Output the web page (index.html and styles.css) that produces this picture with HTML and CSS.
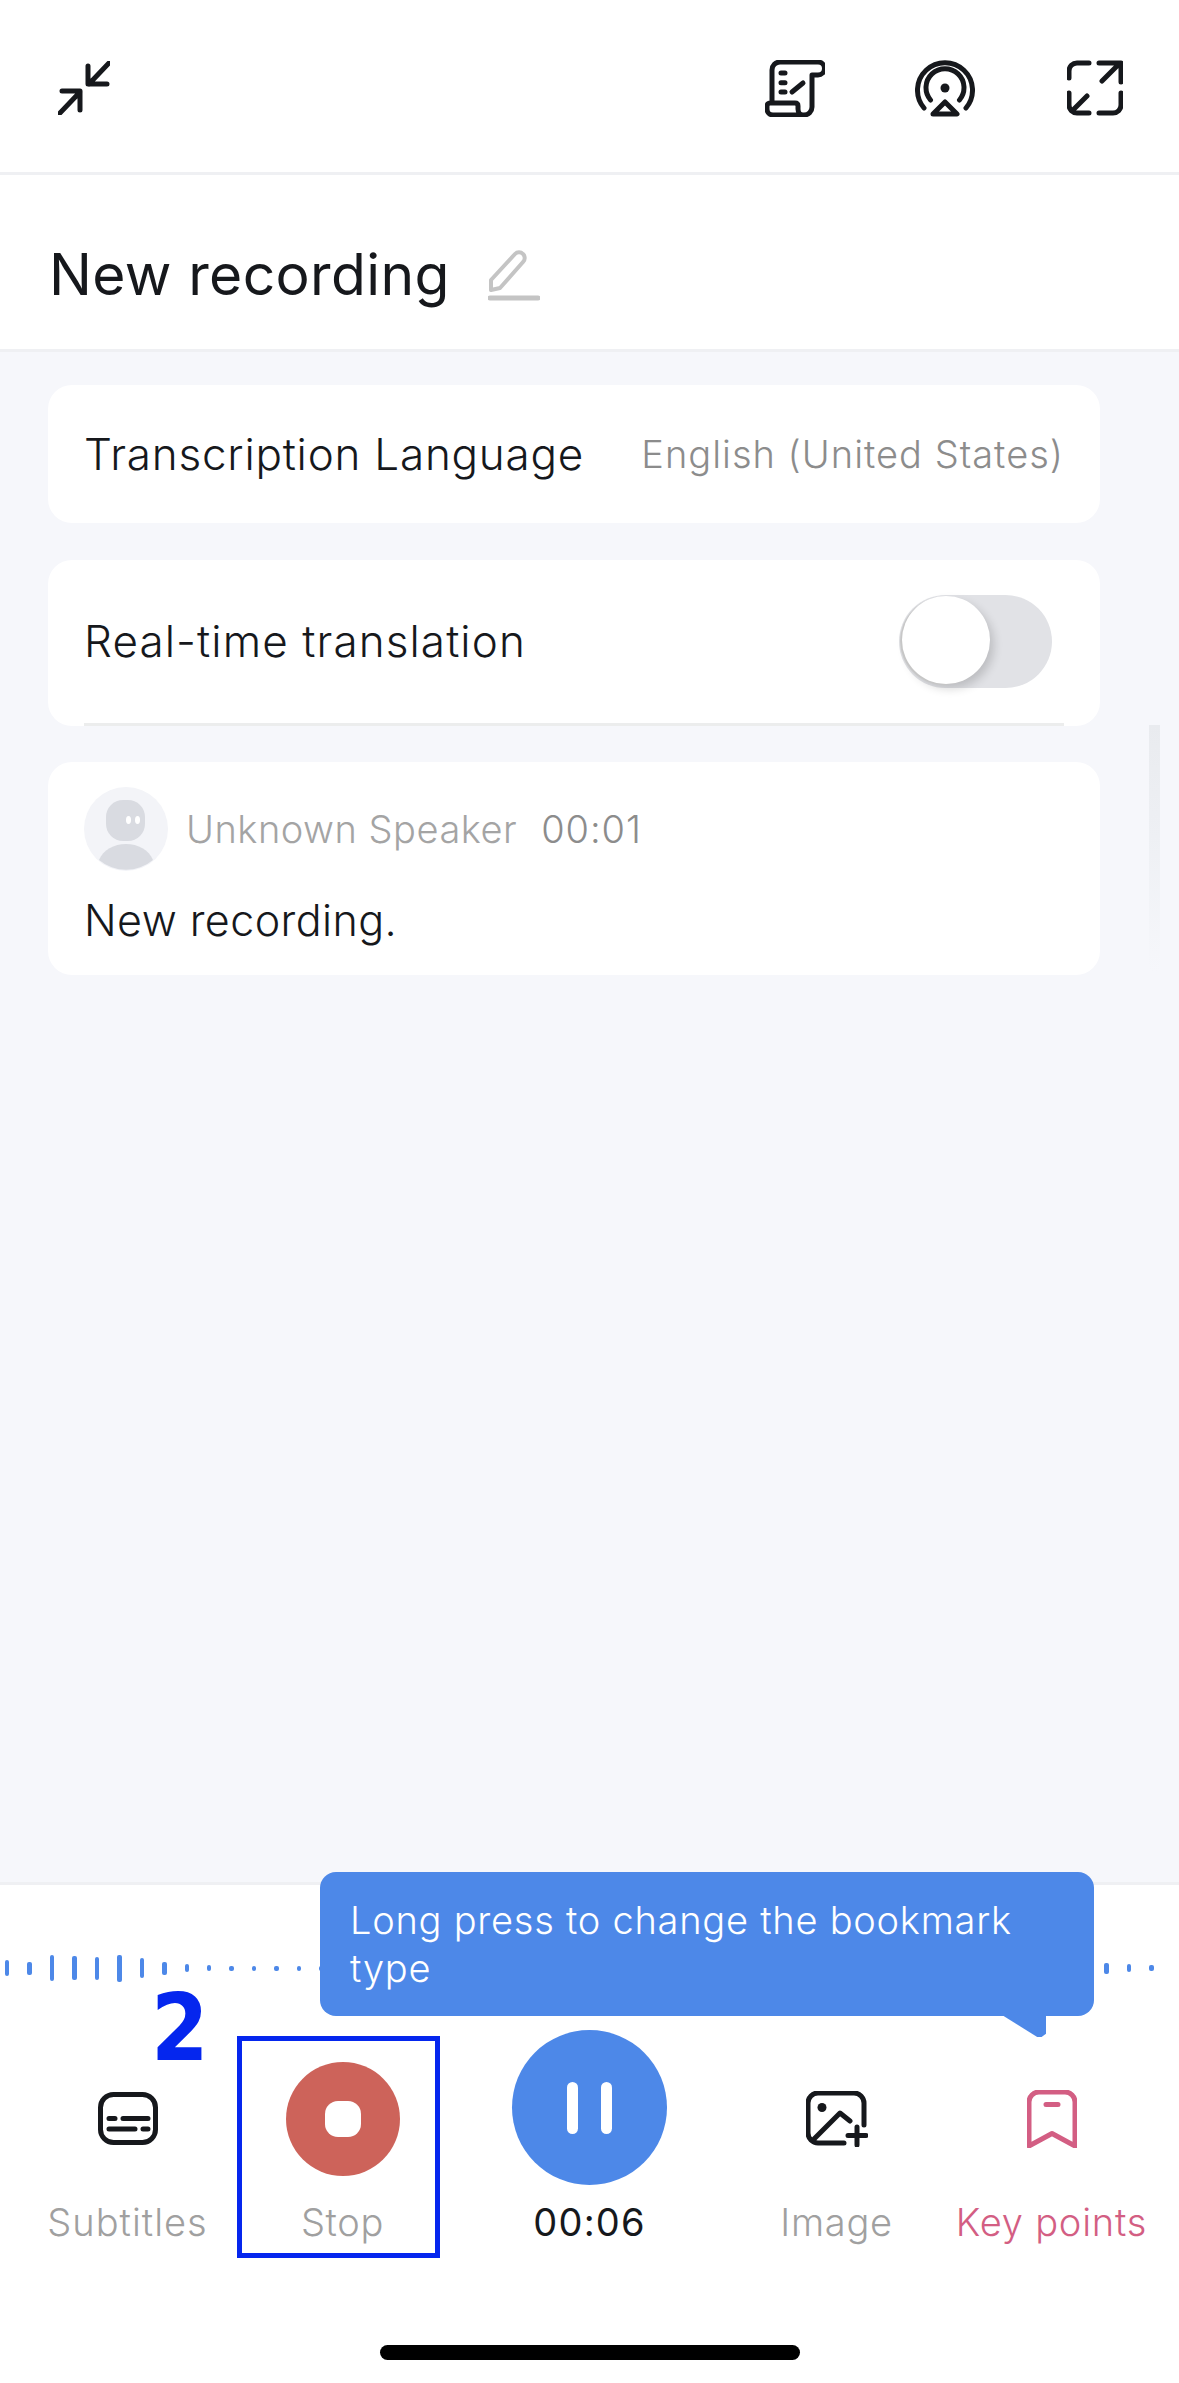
FILE: index.html
```html
<!DOCTYPE html>
<html lang="en">
<head>
<meta charset="utf-8">
<title>New recording</title>
<link rel="stylesheet" href="styles.css">
</head>
<body>
<div class="app">
  <header class="topbar">
    <svg class="ic ic-collapse" width="52" height="54" viewBox="0 0 52 54"><path d="M51 2 31 23M30 5v18h19M1 53 22 31M4 30h18v19"/></svg>
    <div class="top-actions">
      <svg class="ic" width="60" height="57" viewBox="0 0 60 57"><path d="M7 42V10a8 8 0 0 1 8-8h38a6.500 6.500 0 0 1 0 13h-6v32a8 8 0 0 1-8 8H8a6 6 0 0 1-6-6v-3a3 3 0 0 1 3-3h25c2 0 3 1 3 3v3c0 3 2 6 5 6"/><path d="M16 13h4M16 22.700h4M16 32h4M27 32l11-9"/></svg>
      <svg class="ic ic-radar" width="60" height="60" viewBox="0 0 60 60"><path d="M9 50a27.500 27.500 0 1 1 42 0M15.500 42a19 19 0 1 1 29 0M30 44l12 12H18z"/><circle class="fill" cx="30" cy="30" r="4.500"/></svg>
      <svg class="ic" width="56" height="56" viewBox="0 0 56 56"><path d="M22 3H10a8 8 0 0 0-8 8v7M32 3h22v19M35 21 51 5M2 33v12a8 8 0 0 0 8 8h12M54 33v12a8 8 0 0 1-8 8H32M20 36 5 51"/></svg>
    </div>
  </header>
  <section class="titlebar">
    <h1 class="title">New recording</h1>
    <svg class="pencil" width="52" height="52" viewBox="0 0 52 52"><path d="M3 41V31L27 5a5.500 5.500 0 0 1 8 0 5.500 5.500 0 0 1 0 8L12 39z"/><path class="under" d="M2 49h48"/></svg>
  </section>
  <main class="content">
    <div class="card row lang-card">
      <span class="label">Transcription Language</span>
      <span class="value">English (United States)</span>
    </div>
    <div class="card translate-card">
      <div class="row translate-row">
        <span class="label label-wide">Real-time translation</span>
        <span class="toggle"><span class="thumb"></span></span>
      </div>
      <div class="divider"></div>
    </div>
    <div class="card speech-card">
      <div class="speaker">
        <svg class="avatar" width="84" height="84" viewBox="0 0 84 84"><circle cx="42" cy="42" r="42" fill="#f3f4f8"/><rect x="22" y="13" width="39" height="41" rx="17" fill="#d9dbe1"/><ellipse cx="44.500" cy="33" rx="2.500" ry="4" fill="#fff"/><ellipse cx="53.500" cy="33" rx="2.500" ry="4" fill="#fff"/><path d="M15 73c4-10 15-16 27-16s23 6 27 16a42 42 0 0 1-54 0z" fill="#d9dbe1"/></svg>
        <span class="speaker-name">Unknown Speaker</span>
        <span class="speaker-time">00:01</span>
      </div>
      <p class="speech">New recording.</p>
    </div>
    <div class="scrollbar"></div>
  </main>
  <footer class="panel">
    <div class="wave" id="wave">
      <i style="height:16px"></i><i style="height:13px"></i><i style="height:26px"></i><i style="height:24px"></i><i style="height:23px"></i><i style="height:27px"></i><i style="height:20px"></i><i style="height:13px"></i><i style="height:8px"></i><i style="height:6px"></i><i style="height:5px"></i><i style="height:5px"></i><i style="height:5px"></i><i style="height:5px"></i>
      <i style="height:5px"></i><i style="height:5px"></i><i style="height:5px"></i><i style="height:5px"></i><i style="height:5px"></i><i style="height:5px"></i><i style="height:5px"></i><i style="height:5px"></i><i style="height:5px"></i><i style="height:5px"></i><i style="height:5px"></i><i style="height:5px"></i><i style="height:5px"></i><i style="height:5px"></i><i style="height:5px"></i><i style="height:5px"></i><i style="height:5px"></i><i style="height:5px"></i><i style="height:5px"></i><i style="height:5px"></i><i style="height:5px"></i><i style="height:5px"></i><i style="height:5px"></i><i style="height:5px"></i><i style="height:5px"></i><i style="height:5px"></i><i style="height:5px"></i><i style="height:5px"></i><i style="height:5px"></i><i style="height:5px"></i><i style="height:5px"></i><i style="height:5px"></i><i style="height:5px"></i><i style="height:5px"></i><i style="height:5px"></i><i style="height:11px"></i><i style="height:8px"></i><i style="height:6px"></i>
    </div>
    <nav class="controls">
      <div class="ctl ctl-sub">
        <div class="ctl-icon"><svg class="ic" width="60" height="53" viewBox="0 0 60 53"><rect x="2.500" y="2.500" width="55" height="48" rx="13"/><path d="M11 26.500h6M25 26.500h25M11 37h26M45 37h5"/></svg></div>
        <span class="ctl-label">Subtitles</span>
      </div>
      <div class="ctl">
        <div class="ctl-icon"><span class="stop"><span class="stop-sq"></span></span></div>
        <span class="ctl-label">Stop</span>
      </div>
      <div class="ctl ctl-main">
        <div class="pause"><span class="pause-bar"></span><span class="pause-bar"></span></div>
        <span class="ctl-label timer">00:06</span>
      </div>
      <div class="ctl">
        <div class="ctl-icon"><svg class="ic" width="62" height="56" viewBox="0 0 62 56"><path d="M38 52H12A10 10 0 0 1 2 42V12A10 10 0 0 1 12 2h36a10 10 0 0 1 10 10v22M7 49l27-27 10 8M51 36v18M42 44.500h18"/><circle class="fill" cx="16" cy="16.500" r="4.500"/></svg></div>
        <span class="ctl-label">Image</span>
      </div>
      <div class="ctl ctl-key">
        <div class="ctl-icon"><svg class="ic ic-key" width="50" height="58" viewBox="0 0 50 58"><path d="M2 56V12A10 10 0 0 1 12 2h26a10 10 0 0 1 10 10v44L25 43.500zM19 14.500h12"/></svg></div>
        <span class="ctl-label">Key points</span>
      </div>
    </nav>
    <div class="home-bar"></div>
    <div class="tooltip">Long press to change the bookmark type<span class="tail"></span></div>
  </footer>
  <div class="step-num">2</div>
  <div class="step-box"></div>
</div>
</body>
</html>
```
FILE: styles.css
```css
* { box-sizing: border-box; }
html, body { margin: 0; padding: 0; }
body { font-family: Inter, "Liberation Sans", sans-serif; color: #16181c; background: #fff; }
.app { position: relative; width: 1179px; height: 2383px; display: flex; flex-direction: column; overflow: hidden; background: #f6f7fb; }

.ic { fill: none; stroke: #16181c; stroke-width: 5; stroke-linecap: round; stroke-linejoin: round; display: block; }
.ic .fill { fill: #16181c; stroke: none; }

.topbar { height: 175px; flex: none; background: #fff; border-bottom: 3px solid #eff0f3; display: flex; align-items: center; justify-content: space-between; padding: 0 56px 0 58px; }
.top-actions { display: flex; align-items: center; gap: 90px; }
.ic-collapse { margin-top: 3px; }
.top-actions .ic { margin-top: 4px; }
.top-actions .ic-radar { margin-right: 2px; }

.titlebar { height: 177px; flex: none; background: #fff; border-bottom: 3px solid #eff0f3; display: flex; align-items: center; padding: 24px 0 0 49px; gap: 38px; }
.title { margin: 0; font-size: 57px; font-weight: 420; letter-spacing: 0.35px; line-height: 1; }
.pencil { fill: none; stroke: #c4c4c4; stroke-width: 4; stroke-linejoin: round; stroke-linecap: round; margin-top: 2px; }
.pencil .under { stroke-width: 5; }

.content { position: relative; flex: 1; padding: 33px 79px 0 48px; display: flex; flex-direction: column; }
.card { background: #fff; border-radius: 24px; }
.row { display: flex; align-items: center; justify-content: space-between; }
.lang-card { height: 138px; padding: 0 36px; margin-bottom: 37px; }
.label { font-size: 44px; line-height: 1.2; letter-spacing: 0.78px; font-weight: 350; }
.label-wide { letter-spacing: 1.1px; }
.value { font-size: 38px; color: #8c8c8c; letter-spacing: 1px; font-weight: 350; }
.translate-card { height: 166px; padding: 0 36px; margin-bottom: 36px; overflow: hidden; display: flex; flex-direction: column; }
.translate-row { height: 163px; flex: none; padding-right: 12px; }
.toggle { width: 153px; height: 93px; border-radius: 47px; background: #e1e2e6; display: block; }
.thumb { display: block; width: 88px; height: 88px; margin: 1px 0 0 3px; border-radius: 50%; background: #fff; box-shadow: -2px 1px 1px #c6c6c6, 4px 5px 10px rgba(0,0,0,.16); }
.divider { height: 3px; background: #eceded; }
.speech-card { height: 213px; padding: 25px 38px 0 36px; }
.speaker { display: flex; align-items: center; height: 84px; }
.avatar { display: block; margin-right: 18px; }
.speaker-name { font-size: 38px; color: #a4a4a4; letter-spacing: 0.5px; margin-right: 24px; font-weight: 350; }
.speaker-time { font-size: 38px; color: #8c8c8c; letter-spacing: 0.9px; font-weight: 350; }
.speech { margin: 22px 0 0; font-size: 43px; line-height: 54px; letter-spacing: 0.43px; font-weight: 350; }
.scrollbar { position: absolute; left: 1149px; top: 373px; width: 11px; height: 247px; background: linear-gradient(#e9ebef, #eef0f4 45%, #f6f7fb); }

.panel { position: relative; height: 501px; flex: none; background: #fff; border-top: 3px solid #eff0f3; display: flex; flex-direction: column; }
.wave { height: 0; margin: 83px 0 0 5px; display: flex; align-items: center; gap: 18px; }
.wave i { width: 4.450px; flex: none; border-radius: 2px; background: #4d88e8; }
.controls { display: grid; grid-template-columns: 215px 215px 279px 215px 215px; padding: 0 20px; margin-top: 66px; }
.ctl { display: flex; flex-direction: column; align-items: center; }
.ctl-icon { height: 132px; margin-top: 18.500px; display: flex; align-items: center; justify-content: center; }
.ctl-label { font-size: 38px; line-height: 50px; color: #a0a0a0; letter-spacing: 0.7px; margin-top: 12.500px; white-space: nowrap; font-weight: 350; }
.ctl-sub .ctl-label { letter-spacing: 1px; }
.stop { width: 114px; height: 114px; border-radius: 50%; background: #cd635a; display: flex; align-items: center; justify-content: center; }
.stop-sq { width: 36px; height: 36px; border-radius: 13px; background: #fff; }
.pause { width: 155px; height: 155px; border-radius: 50%; background: #4d88e8; display: flex; align-items: center; justify-content: center; gap: 23px; margin-top: -4px; margin-bottom: 11px; }
.pause-bar { width: 11px; height: 52px; border-radius: 6px; background: #fff; }
.timer { color: #16181c; font-weight: 400; letter-spacing: 1.200px; margin-top: 1px; }
.ic-key { stroke: #d35e83; }
.ctl-key .ctl-label { color: #d35e83; letter-spacing: 0.8px; }
.home-bar { position: absolute; left: 380px; top: 460px; width: 420px; height: 15px; border-radius: 8px; background: #000; }
.tooltip { position: absolute; left: 320px; top: -13px; width: 774px; height: 144px; padding: 24px 30px 0; border-radius: 16px; background: #4d88e8; color: #fff; font-size: 38px; line-height: 48px; letter-spacing: 0.75px; font-weight: 300; }
.tail { position: absolute; left: 682px; top: 143px; width: 44px; height: 22px; background: #4d88e8; clip-path: polygon(0 0, 100% 0, 100% 85%, 90% 100%, 80% 100%); }
.step-num { position: absolute; left: 151px; top: 1974px; font-family: "DejaVu Sans", sans-serif; font-weight: 700; font-stretch: condensed; font-size: 92px; line-height: 110px; color: #0526ee; }
.step-box { position: absolute; left: 237px; top: 2036px; width: 203px; height: 222px; border: 5px solid #0526ee; }
```
